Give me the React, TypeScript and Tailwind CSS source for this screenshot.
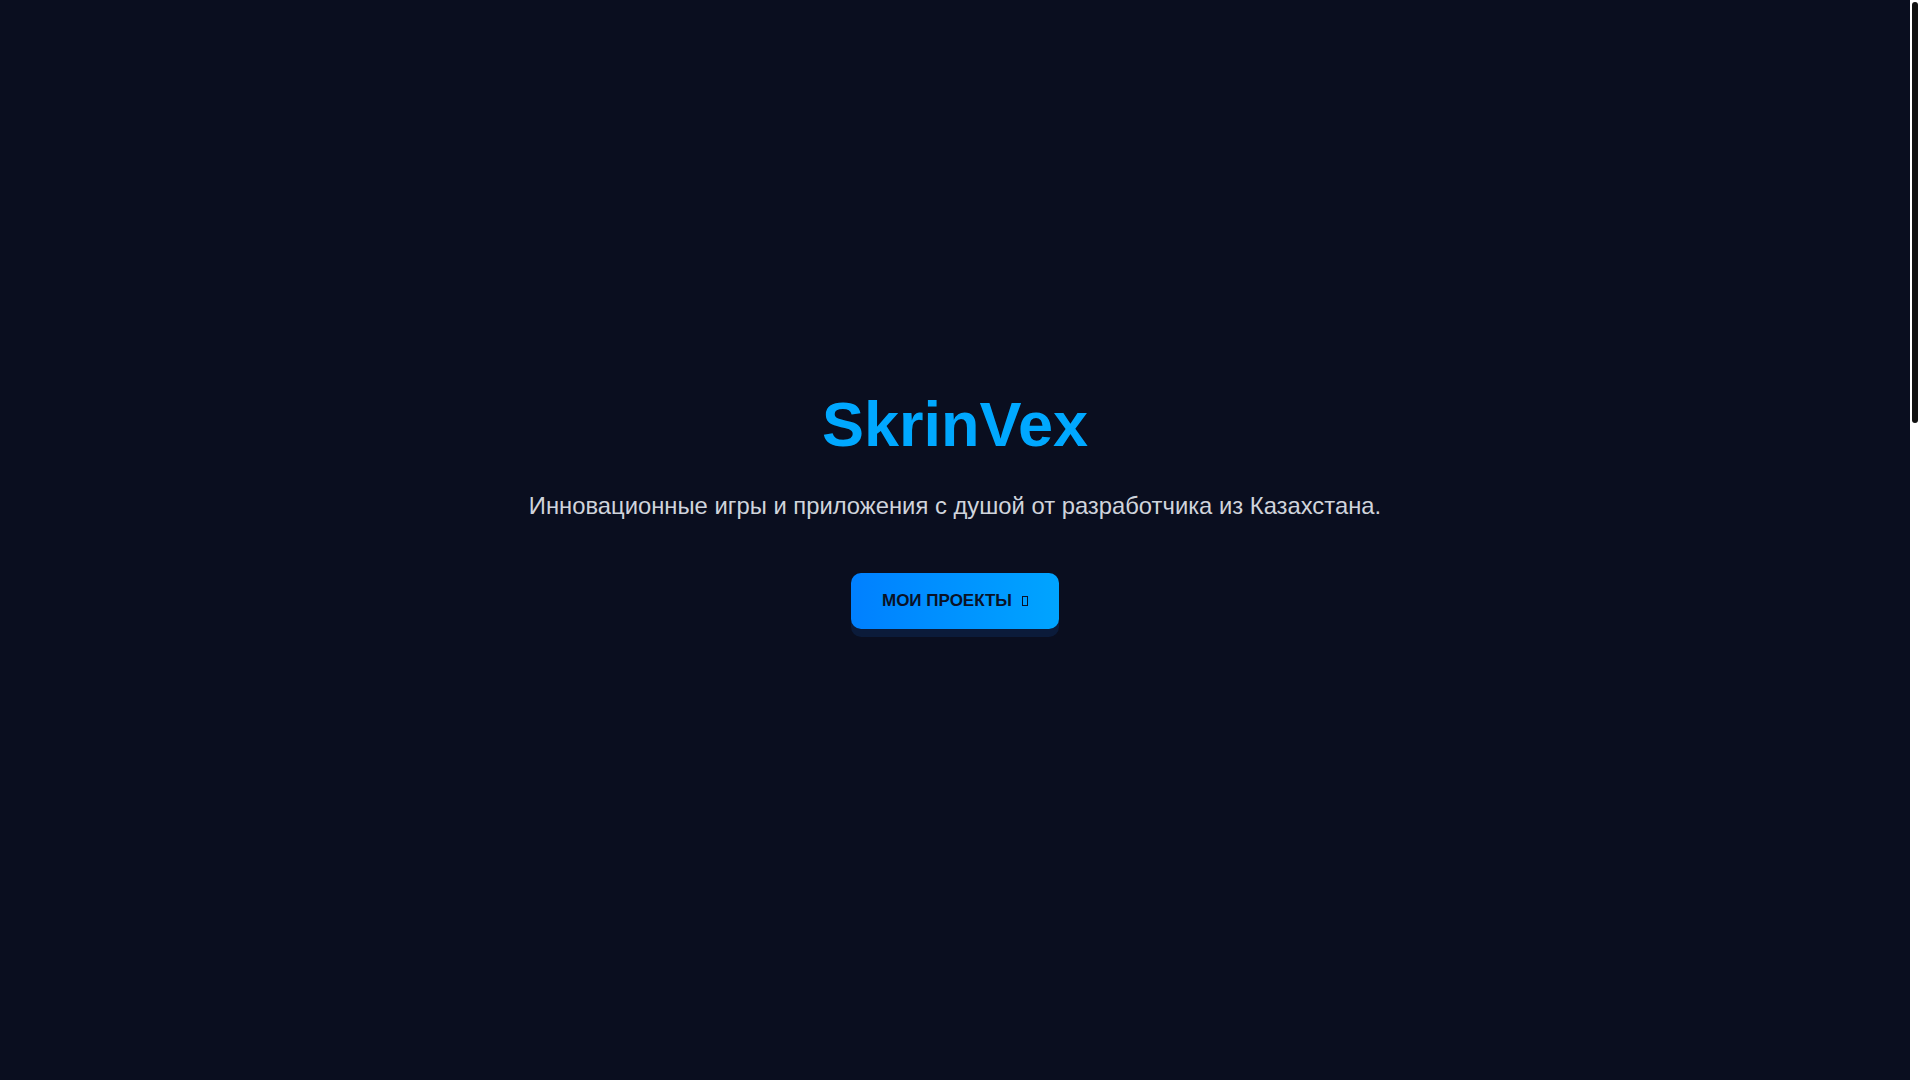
import React from 'react';

export default function App() {
  return (
    <div
      className="h-screen flex bg-[#0a0e1f] text-gray-300"
      style={{ fontFamily: '"Liberation Sans", Arial, sans-serif' }}
    >
      <main className="flex-1 overflow-y-auto [scrollbar-width:none]">
        {/* hero */}
        <section className="h-screen flex flex-col items-center justify-center pb-[64px] text-center">
          <h1 className="text-[63px] leading-[1.2] font-bold text-[#00a8ff]">SkrinVex</h1>
          <p className="mt-[24px] text-[23.8px] leading-[1.6] text-[#d0d4dc]">
            Инновационные игры и приложения с душой от разработчика из Казахстана.
          </p>
          <a
            href="#projects"
            className="mt-[48px] h-[56px] flex items-center gap-[10px] px-[31px] rounded-[10px] bg-gradient-to-r from-[#0080ff] to-[#00a4ff] text-[#0a1226] text-[17px] font-bold uppercase shadow-[0_8px_0_#0b1b3a]"
          >
            <span>Мои проекты</span>
            <span className="inline-block w-[6px] h-[10px] border border-[#0a1226]" />
          </a>
        </section>

        {/* projects, below the fold */}
        <section id="projects" className="min-h-[1677px]" />
      </main>

      {/* page scrollbar */}
      <aside className="w-[10px] bg-white pt-[2px] pl-[2px]">
        <div className="w-[6px] h-[421px] rounded-full bg-[#111111]" />
      </aside>
    </div>
  );
}
